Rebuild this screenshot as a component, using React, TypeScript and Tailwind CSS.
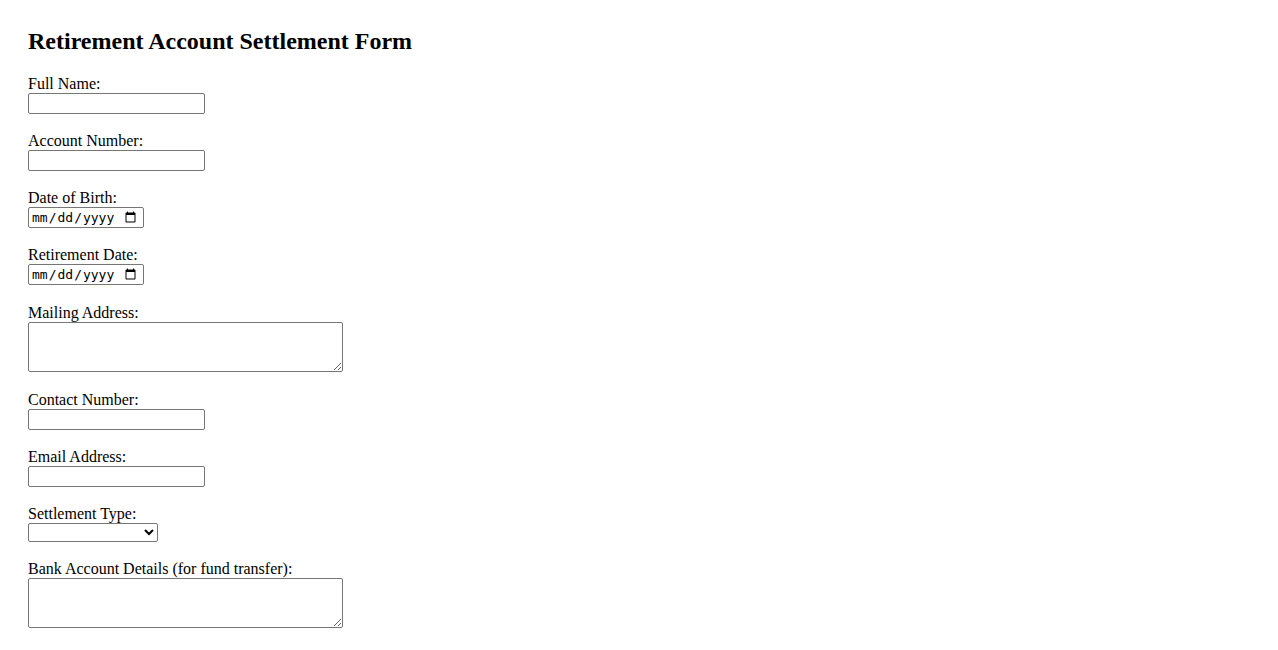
import React from "react";

const serif = { fontFamily: '"Liberation Serif", "Times New Roman", serif' };

function Label({ children }: { children: React.ReactNode }) {
  return (
    <label className="block h-[18px] text-[16px] leading-[18px] text-black">
      {children}
    </label>
  );
}

const textInput =
  "block w-[177px] h-[21px] border border-[#767676] rounded-[2px] px-[2px] py-[1px] bg-white text-[13.33px] font-['Liberation_Sans',Arial,sans-serif]";
const dateInput =
  "block w-[116px] h-[21px] border border-[#767676] rounded-[2px] pl-[2px] pr-[4px] py-[1px] bg-white text-[13px] text-black font-['DejaVu_Sans_Mono',monospace]";
const areaInput =
  "block w-[315px] h-[50px] border border-[#767676] rounded-[2px] px-[2px] py-[2px] bg-white text-[13.33px] font-['Liberation_Mono',monospace]";

export default function App() {
  return (
    <div className="min-h-screen bg-white pt-[28px] px-[28px] text-black" style={serif}>
      <h2 className="text-[24px] font-bold leading-[27px] mb-[20px]">
        Retirement Account Settlement Form
      </h2>
      <form className="flex flex-col">
        <div className="mb-[18px]">
          <Label>Full Name:</Label>
          <input type="text" className={textInput} />
        </div>
        <div className="mb-[18px]">
          <Label>Account Number:</Label>
          <input type="text" className={textInput} />
        </div>
        <div className="mb-[18px]">
          <Label>Date of Birth:</Label>
          <input type="date" className={dateInput} />
        </div>
        <div className="mb-[19px]">
          <Label>Retirement Date:</Label>
          <input type="date" className={dateInput} />
        </div>
        <div className="mb-[19px]">
          <Label>Mailing Address:</Label>
          <textarea className={areaInput} />
        </div>
        <div className="mb-[18px]">
          <Label>Contact Number:</Label>
          <input type="tel" className={textInput} />
        </div>
        <div className="mb-[18px]">
          <Label>Email Address:</Label>
          <input type="email" className={textInput} />
        </div>
        <div className="mb-[18px]">
          <Label>Settlement Type:</Label>
          <select className="block w-[130px] h-[19px] border border-[#767676] rounded-[2px] bg-white text-[13.33px] font-['Liberation_Sans',Arial,sans-serif]">
            <option value=""></option>
            <option value="lump">Lump Sum Payment</option>
            <option value="annuity">Annuity</option>
          </select>
        </div>
        <div className="mb-[18px]">
          <Label>Bank Account Details (for fund transfer):</Label>
          <textarea className={areaInput} />
        </div>
      </form>
    </div>
  );
}
